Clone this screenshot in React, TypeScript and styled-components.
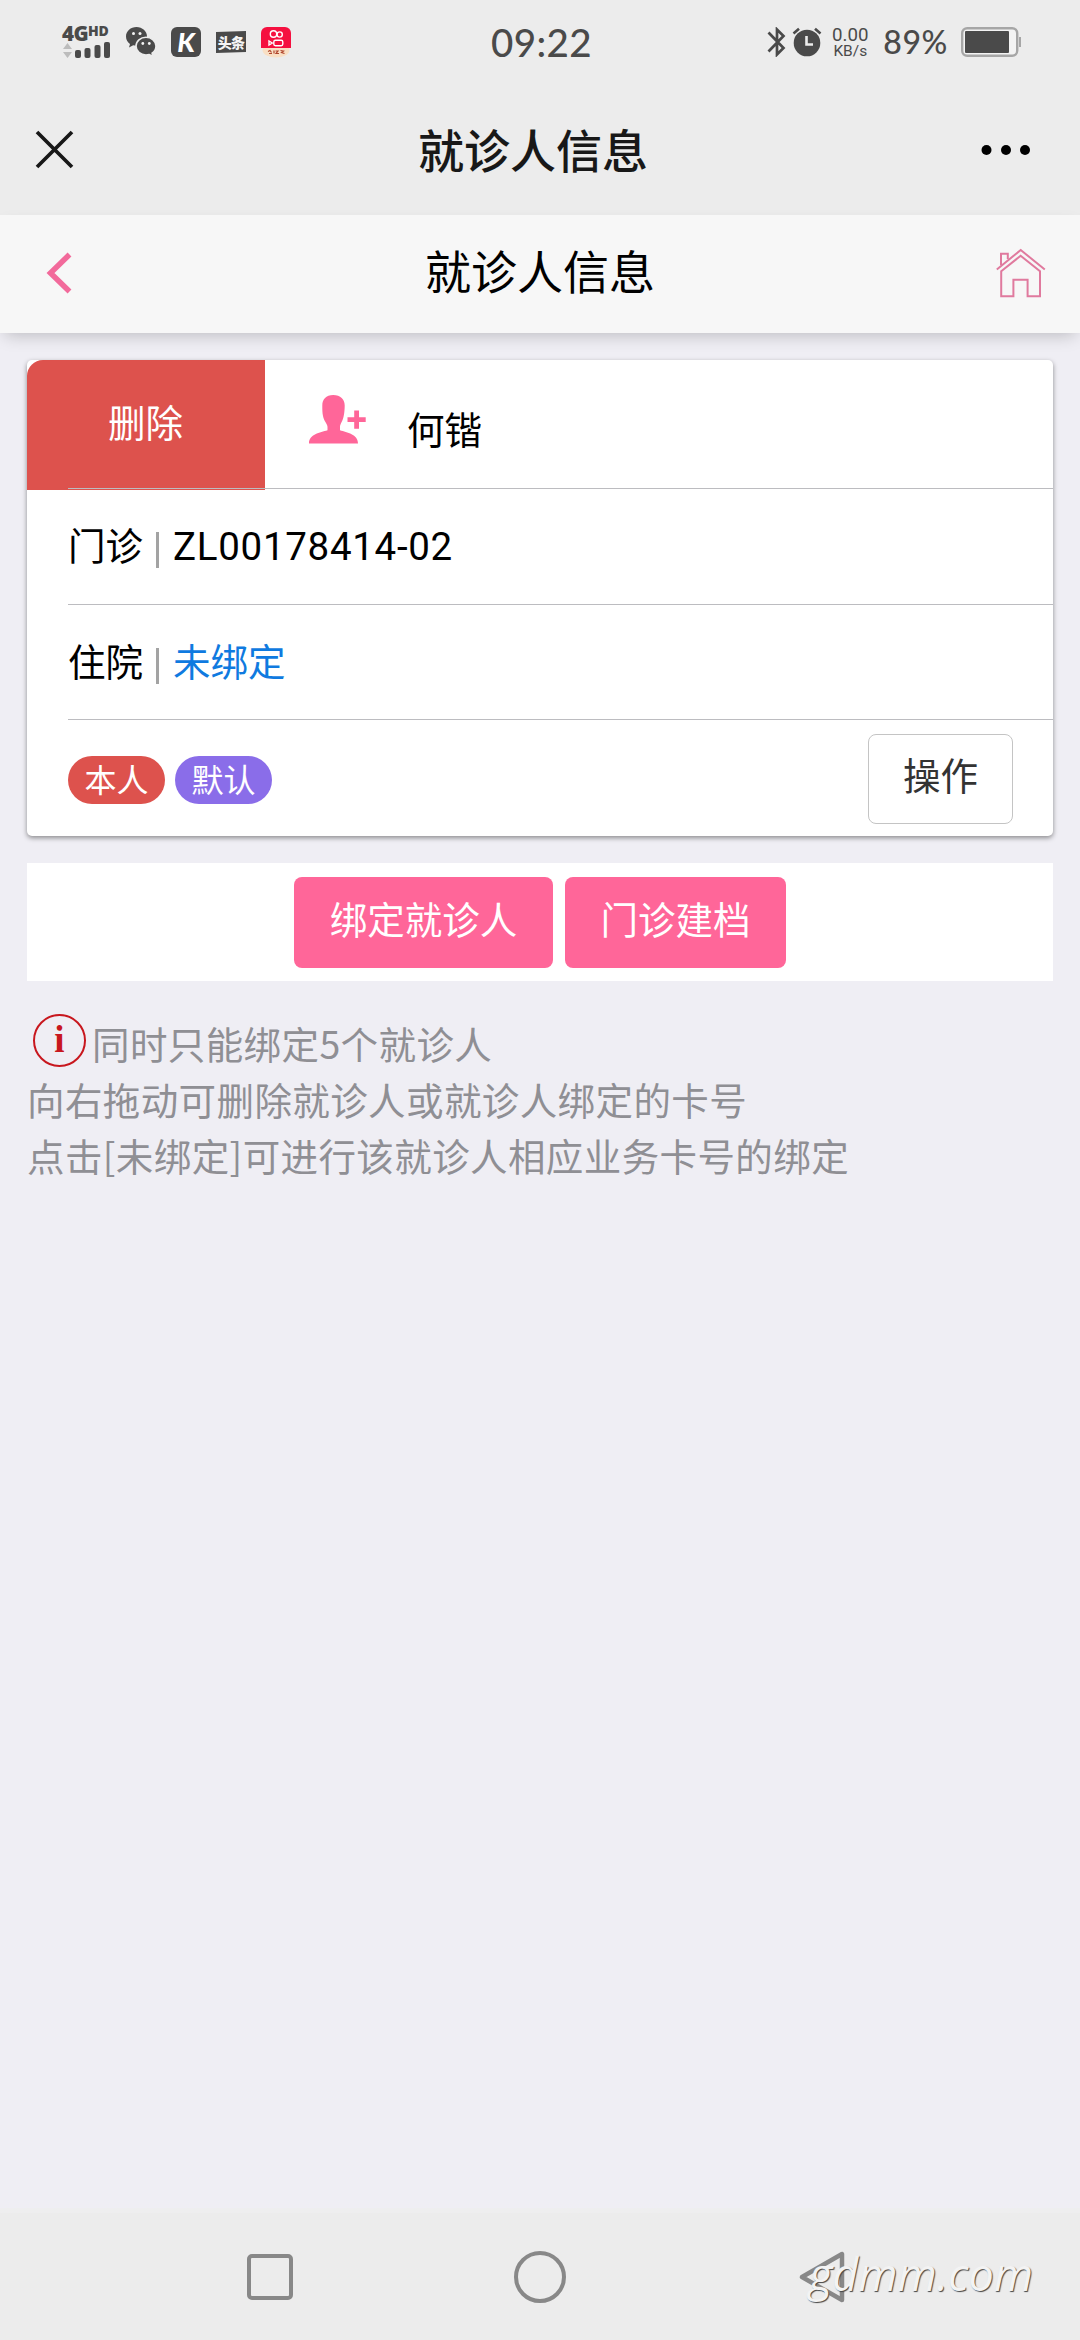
import React from "react";
import styled, { createGlobalStyle } from "styled-components";

const PINK = "#ff6699";
const INK = "#4a4a4a";
const CJK = `"Noto Sans CJK SC", sans-serif`;

const GlobalStyle = createGlobalStyle`
  *, *::before, *::after { box-sizing: border-box; }
  body { margin: 0; background: #efeef4; }
  button { font: inherit; margin: 0; cursor: pointer; }
`;

const Screen = styled.div`
  width: 1080px;
  height: 2340px;
  display: flex;
  flex-direction: column;
  background: #efeef4;
  font-family: Roboto, ${CJK};
  font-size: 37.5px;
  line-height: 56px;
  color: #000;
  overflow: hidden;
  position: relative;
`;

/* ---------- system status bar ---------- */

const StatusBar = styled.header`
  height: 84px;
  flex: none;
  display: grid;
  grid-template-columns: 1fr auto 1fr;
  align-items: center;
  padding: 0 59px 0 62px;
  background: #ececec;
  color: ${INK};
`;

const StatusLeft = styled.div`
  display: flex;
  align-items: center;
  gap: 15px;
`;

const StatusRight = styled.div`
  display: flex;
  align-items: center;
  justify-content: flex-end;
`;

const Clock = styled.time`
  font: 500 38.5px/50px Lato, sans-serif;
  letter-spacing: 0.4px;
`;

const Signal = styled.div`
  width: 49px;
  height: 34px;
  display: flex;
  flex-direction: column;
  justify-content: space-between;
`;

const Network = styled.div`
  display: flex;
  align-items: flex-start;
  height: 15px;
  font: 800 20.5px/16px "Open Sans", sans-serif;
  letter-spacing: -0.6px;
`;

const NetworkHd = styled.span`
  font-size: 14px;
  line-height: 11px;
  letter-spacing: -0.2px;
`;

const KLogo = styled.div`
  width: 30px;
  height: 30px;
  border-radius: 6px;
  background: ${INK};
  color: #fff;
  display: flex;
  align-items: center;
  justify-content: center;
  font: italic 900 27px/30px Lato, sans-serif;
`;

const NewsLogo = styled.div`
  width: 30px;
  height: 22px;
  background: ${INK};
  clip-path: polygon(0 5%, 100% 0, 100% 95%, 0 100%);
  color: #f4f4f4;
  font: 800 14px/22px ${CJK};
  letter-spacing: -0.8px;
  text-align: center;
`;

const Speed = styled.div`
  width: 38px;
  margin: 0 14px 0 9px;
  display: flex;
  flex-direction: column;
  align-items: center;
  font-family: Roboto, sans-serif;
`;

const SpeedValue = styled.span`
  font-size: 18.7px;
  line-height: 17px;
`;

const SpeedUnit = styled.span`
  font-size: 15.5px;
  line-height: 14px;
`;

const Percent = styled.span`
  font: 500 32px/36px Lato, sans-serif;
  letter-spacing: 0.6px;
  margin-right: 13px;
`;

/* ---------- title bars ---------- */

const TitleBar = styled.div`
  height: 131px;
  flex: none;
  display: grid;
  grid-template-columns: 1fr auto 1fr;
  align-items: center;
  padding: 0 49px 0 35px;
  background: #ececec;
`;

const Title = styled.h1`
  margin: 0;
  padding-bottom: 4px;
  color: #181818;
  font: 500 46px/60px ${CJK};
`;

const PageTitle = styled.h2`
  margin: 0 12px 0 0;
  padding-bottom: 10px;
  font: 400 46px/60px ${CJK};
`;

const PageBar = styled.nav`
  height: 118px;
  flex: none;
  display: grid;
  grid-template-columns: 1fr auto 1fr;
  align-items: center;
  padding: 0 34px 0 46px;
  background: #f7f7f7;
  box-shadow: 0 7px 16px -5px rgba(0, 0, 0, 0.22);
`;

const BarEnd = styled.div`
  display: flex;
  justify-content: flex-end;
`;

/* ---------- patient card ---------- */

const Content = styled.main`
  flex: 1;
  padding: 27px 27px 0;
`;

const Card = styled.section`
  height: 476px;
  background: #fff;
  border-radius: 5px;
  display: flex;
  flex-direction: column;
  box-shadow: 0 2px 5px rgba(0, 0, 0, 0.42);
`;

const NameRow = styled.div`
  height: 128px;
  flex: none;
  display: flex;
`;

const DeleteButton = styled.button`
  width: 238px;
  height: 130px;
  flex: none;
  padding: 0 1px 3px 0;
  border: 0;
  border-radius: 16px 0 0 0;
  background: #dd524d;
  color: #fff;
`;

const NameCell = styled.div`
  flex: 1;
  display: flex;
  padding: 34px 0 0 43px;
`;

const Name = styled.span`
  margin: 9px 0 0 41px;
`;

const Row = styled.div<{ $last?: boolean }>`
  height: ${(p) => (p.$last ? "117px" : "115.5px")};
  flex: none;
  display: flex;
  align-items: center;
  margin-left: 41px;
  padding: ${(p) => (p.$last ? "4px 40px 0 0" : "2px 0 0")};
  border-top: 1px solid #bcbcc0;
  position: relative;
`;

const Separator = styled.i`
  width: 3px;
  height: 36px;
  margin: 6px 14px 0 13px;
  background: #a3a3a3;
`;

const CardNumber = styled.span`
  font-family: Roboto, sans-serif;
  font-size: 38.5px;
  letter-spacing: 0.7px;
`;

const BindLink = styled.a`
  color: #0f7ae0;
`;

const Badge = styled.span<{ $color: string }>`
  width: 97px;
  height: 48px;
  margin-right: 10px;
  border-radius: 24px;
  background: ${(p) => p.$color};
  color: #fff;
  font: 400 32px/45px ${CJK};
  text-align: center;
`;

const ActionButton = styled.button`
  width: 145px;
  height: 90px;
  margin: -3px 0 0 auto;
  padding: 0 0 3px;
  border: 1.5px solid #c4c4c4;
  border-radius: 8px;
  background: #fff;
  color: #333;
`;

/* ---------- actions and hints ---------- */

const Actions = styled.div`
  height: 118px;
  margin-top: 27px;
  display: flex;
  justify-content: center;
  align-items: center;
  gap: 12px;
  background: #fff;
`;

const PrimaryButton = styled.button<{ $width: number }>`
  width: ${(p) => p.$width}px;
  height: 91px;
  padding: 0 0 2px;
  border: 0;
  border-radius: 8px;
  background: ${PINK};
  color: #fff;
`;

const Hints = styled.div`
  margin-top: 34px;
  color: #8f8f94;
  font-family: ${CJK};
  letter-spacing: 0.4px;
`;

const HintLine = styled.p`
  margin: 0;
  height: 56px;
  display: flex;
  align-items: center;
  white-space: nowrap;
`;

const InfoMark = styled.span`
  width: 53px;
  height: 53px;
  flex: none;
  margin: -5px 6px 0 6px;
  border: 2px solid #c8171e;
  border-radius: 50%;
  color: #c8171e;
  font: 700 37px/47px "Liberation Serif", serif;
  text-align: center;
`;

/* ---------- system navigation ---------- */

const SystemNav = styled.footer`
  height: 132px;
  flex: none;
  display: grid;
  grid-template-columns: repeat(3, 270px);
  justify-content: center;
  justify-items: center;
  align-items: center;
  background: #ececec;
  border-top: 5px solid #eeeeef;
`;

const SquareKey = styled.span`
  width: 46px;
  height: 46px;
  border: 4px solid #888;
  border-radius: 5px;
`;

const CircleKey = styled.span`
  width: 52px;
  height: 52px;
  border: 4px solid #888;
  border-radius: 50%;
`;

const BackKey = styled.svg`
  margin-left: 23px;
`;

const Watermark = styled.span`
  position: absolute;
  right: 47px;
  bottom: 38px;
  font: italic 400 45px/56px "Open Sans", sans-serif;
  color: #f3f3f3;
  text-shadow: 1px 1px 1px #444;
`;

const SignalBars = () => (
  <svg width="49" height="18" viewBox="0 0 49 18">
    <path d="M1 8 5.500 2 10 8ZM1 11h9l-4.500 6Z" fill="#bcbcbc" />
    <g fill={INK}>
      <rect x="13" y="9" width="6" height="8" rx="2" />
      <rect x="22.500" y="7" width="6" height="10" rx="2" />
      <rect x="32.500" y="4" width="6" height="13" rx="2" />
      <rect x="42" y="1" width="6" height="16" rx="2" />
    </g>
  </svg>
);

const WechatIcon = () => (
  <svg width="30" height="30" viewBox="0 0 30 30">
    <path d="M10.500 0C4.700 0 0 4.200 0 9.500c0 3 1.500 5.600 4 7.400L3 20.500l4.200-2.200c1 .3 2.200.5 3.300.5C16.300 18.800 21 14.700 21 9.500S16.300 0 10.500 0Z" fill={INK} />
    <path d="M20 10.200c-5.500 0-10 4-10 8.900s4.500 8.900 10 8.900c1.200 0 2.300-.2 3.300-.5L27 29.500l-.9-3.300c2.400-1.600 3.900-4.200 3.900-7.100 0-4.900-4.500-8.900-10-8.900Z" fill={INK} stroke="#ececec" strokeWidth="1.600" />
    <g fill="#f4f4f4">
      <circle cx="7.500" cy="6.500" r="1.500" />
      <circle cx="14" cy="6.500" r="1.500" />
      <circle cx="16.800" cy="16.500" r="1.400" />
      <circle cx="23.300" cy="16.500" r="1.400" />
    </g>
  </svg>
);

const VideoAppIcon = () => (
  <svg width="30" height="31" viewBox="0 0 30 31">
    <ellipse cx="15" cy="23" rx="13.500" ry="7.500" fill="#f9dfc4" />
    <path d="M6 0h18a6 6 0 0 1 6 6v15H0V6a6 6 0 0 1 6-6Z" fill="#f5103f" />
    <g fill="none" stroke="#fff" strokeWidth="1.400">
      <circle cx="12.500" cy="7" r="3.200" />
      <circle cx="18.700" cy="7.500" r="2.600" />
      <rect x="12.800" y="13.300" width="9" height="5.400" rx="1.600" />
      <path d="M11.300 16 8 14v4Z" />
    </g>
    <path d="M7 24.500l2-1 1.500 2M8 26.500h3M13 23.500v3M14.500 24h2.500l-2 2.500h3M19.500 23.500l3 .5-2 1.500 3 1" fill="none" stroke="#b0452c" strokeWidth="1.200" />
  </svg>
);

const BluetoothIcon = () => (
  <svg width="19" height="30" viewBox="0 0 19 30">
    <path d="M1.500 5.500 16.500 21 10 27.500V2.500L16.500 9 1.500 24.500" fill="none" stroke={INK} strokeWidth="2.700" />
  </svg>
);

const AlarmSvg = styled.svg`
  margin-left: 6px;
`;

const AlarmIcon = () => (
  <AlarmSvg width="30" height="30" viewBox="0 0 30 30">
    <circle cx="15" cy="16" r="13.300" fill={INK} />
    <path d="M1.500 6.500 7 1.800M28.500 6.500 23 1.800" stroke={INK} strokeWidth="2.600" />
    <path d="M14.500 9v8.500H21" fill="none" stroke="#ececec" strokeWidth="2.600" />
  </AlarmSvg>
);

const BatteryIcon = () => (
  <svg width="60" height="30" viewBox="0 0 60 30">
    <rect x="1.200" y="1.200" width="55" height="27.600" rx="5" fill="#f3f3f3" stroke="#a6a6a6" strokeWidth="2.400" />
    <rect x="4" y="4" width="44" height="22" rx="1" fill={INK} />
    <rect x="58" y="10" width="2" height="10" fill="#a6a6a6" />
  </svg>
);

const CloseIcon = () => (
  <svg width="39" height="39" viewBox="0 0 39 39">
    <path d="M2 2 37 37M37 2 2 37" stroke="#181818" strokeWidth="3.700" />
  </svg>
);

const MoreIcon = () => (
  <svg width="50" height="12" viewBox="0 0 50 12">
    <circle cx="5.500" cy="6" r="5" />
    <circle cx="25" cy="6" r="5" />
    <circle cx="44" cy="6" r="5" />
  </svg>
);

const BackIcon = () => (
  <svg width="26" height="44" viewBox="0 0 26 44">
    <path d="M23.500 2.500 4.500 21l19 18.500" fill="none" stroke="#f26a9b" strokeWidth="5.500" />
  </svg>
);

const HomeIcon = () => (
  <svg width="50" height="52" viewBox="0 0 50 52" fill="none" stroke="#e07a9e" strokeWidth="2">
    <path d="M.8 21.500 24.700 2 48.800 21.500" />
    <path d="M5.200 23.200 24.600 7.800 44 23.200V48.300H31.600V31.800H17.400V48.300H5.200Z" />
    <path d="M5 17V5.700H11.800V11" />
  </svg>
);

const AddUserIcon = () => (
  <svg width="58" height="50" viewBox="0 0 58 50" fill={PINK}>
    <path d="M25.200 1C18 1 14.300 5.500 14.300 11.500c0 3 0 7.500.7 10.500.9 5 4.500 8 4.500 11v3.200C12 38.500 1 40 1 49.500h49c0-9.500-11-11-18-13.300V33c0-3 2.800-6 3.700-11 .7-3 1-7.500 1-10.500C36.700 5.500 32.500 1 25.200 1Z" />
    <path d="M46.200 16.500h4.800v6.700h6.700v4.800H51v6.700h-4.800V28h-6.700v-4.800h6.700Z" />
  </svg>
);

export default function App() {
  return (
    <>
      <GlobalStyle />
      <Screen>
        <StatusBar>
          <StatusLeft>
            <Signal>
              <Network>
                4G<NetworkHd>HD</NetworkHd>
              </Network>
              <SignalBars />
            </Signal>
            <WechatIcon />
            <KLogo>K</KLogo>
            <NewsLogo>头条</NewsLogo>
            <VideoAppIcon />
          </StatusLeft>
          <Clock>09:22</Clock>
          <StatusRight>
            <BluetoothIcon />
            <AlarmIcon />
            <Speed>
              <SpeedValue>0.00</SpeedValue>
              <SpeedUnit>KB/s</SpeedUnit>
            </Speed>
            <Percent>89%</Percent>
            <BatteryIcon />
          </StatusRight>
        </StatusBar>

        <TitleBar>
          <CloseIcon />
          <Title>就诊人信息</Title>
          <BarEnd>
            <MoreIcon />
          </BarEnd>
        </TitleBar>

        <PageBar>
          <BackIcon />
          <PageTitle>就诊人信息</PageTitle>
          <BarEnd>
            <HomeIcon />
          </BarEnd>
        </PageBar>

        <Content>
          <Card>
            <NameRow>
              <DeleteButton>删除</DeleteButton>
              <NameCell>
                <AddUserIcon />
                <Name>何锴</Name>
              </NameCell>
            </NameRow>
            <Row>
              <span>门诊</span>
              <Separator />
              <CardNumber>ZL00178414-02</CardNumber>
            </Row>
            <Row>
              <span>住院</span>
              <Separator />
              <BindLink>未绑定</BindLink>
            </Row>
            <Row $last>
              <Badge $color="#dd524d">本人</Badge>
              <Badge $color="#8a6de9">默认</Badge>
              <ActionButton>操作</ActionButton>
            </Row>
          </Card>

          <Actions>
            <PrimaryButton $width={259}>绑定就诊人</PrimaryButton>
            <PrimaryButton $width={221}>门诊建档</PrimaryButton>
          </Actions>

          <Hints>
            <HintLine>
              <InfoMark>i</InfoMark>同时只能绑定5个就诊人
            </HintLine>
            <HintLine>向右拖动可删除就诊人或就诊人绑定的卡号</HintLine>
            <HintLine>点击[未绑定]可进行该就诊人相应业务卡号的绑定</HintLine>
          </Hints>
        </Content>

        <SystemNav>
          <SquareKey />
          <CircleKey />
          <BackKey width="48" height="56" viewBox="0 0 48 56">
            <path d="M44 5V51L4 28Z" fill="none" stroke="#888" strokeWidth="4.500" strokeLinejoin="round" />
          </BackKey>
        </SystemNav>
        <Watermark>gdmm.com</Watermark>
      </Screen>
    </>
  );
}
